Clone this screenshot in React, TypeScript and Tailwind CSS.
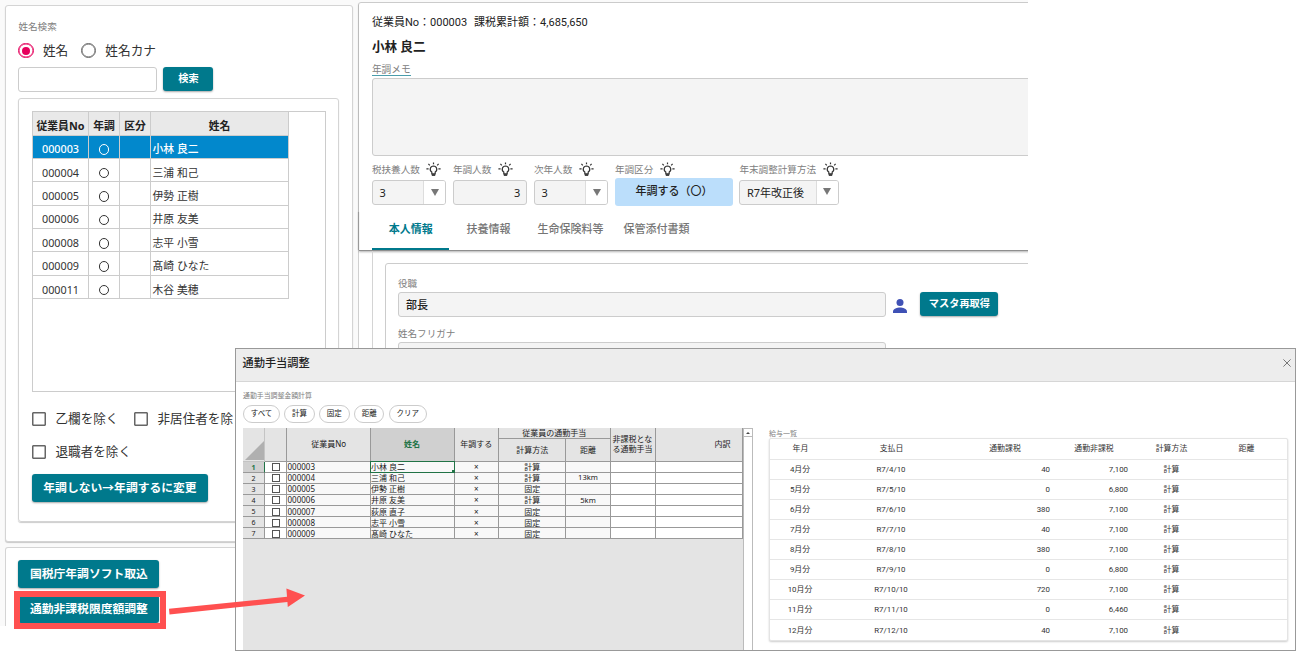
import type { ReactNode } from "react";
import clsx from "clsx";

const employees = [
  { no: "000003", name: "小林 良二" },
  { no: "000004", name: "三浦 和己" },
  { no: "000005", name: "伊勢 正樹" },
  { no: "000006", name: "井原 友美" },
  { no: "000008", name: "志平 小雪" },
  { no: "000009", name: "髙崎 ひなた" },
  { no: "000011", name: "木谷 美穂" },
];

const commuters = [
  { no: "000003", name: "小林 良二", method: "計算", distance: "" },
  { no: "000004", name: "三浦 和己", method: "計算", distance: "13km" },
  { no: "000005", name: "伊勢 正樹", method: "固定", distance: "" },
  { no: "000006", name: "井原 友美", method: "計算", distance: "5km" },
  { no: "000007", name: "荻原 直子", method: "固定", distance: "" },
  { no: "000008", name: "志平 小雪", method: "固定", distance: "" },
  { no: "000009", name: "髙崎 ひなた", method: "固定", distance: "" },
];

const payments = [
  { month: "4月分", date: "R7/4/10", taxable: "40", free: "7,100" },
  { month: "5月分", date: "R7/5/10", taxable: "0", free: "6,800" },
  { month: "6月分", date: "R7/6/10", taxable: "380", free: "7,100" },
  { month: "7月分", date: "R7/7/10", taxable: "40", free: "7,100" },
  { month: "8月分", date: "R7/8/10", taxable: "380", free: "7,100" },
  { month: "9月分", date: "R7/9/10", taxable: "0", free: "6,800" },
  { month: "10月分", date: "R7/10/10", taxable: "720", free: "7,100" },
  { month: "11月分", date: "R7/11/10", taxable: "0", free: "6,460" },
  { month: "12月分", date: "R7/12/10", taxable: "40", free: "7,100" },
];

const Button = ({
  className,
  children,
}: {
  className: string;
  children: ReactNode;
}) => (
  <button
    className={clsx(
      "flex items-center justify-center whitespace-nowrap rounded-[3px] bg-[#00798c] font-bold leading-none text-white shadow-[0_1px_2px_rgba(0,0,0,0.35)]",
      className
    )}
  >
    {children}
  </button>
);

const Radio = ({ checked, label }: { checked?: boolean; label: string }) => (
  <label className="flex items-center gap-[9px] text-[12.7px] leading-none text-[#333]">
    <span
      className={clsx(
        "flex size-[15.5px] items-center justify-center rounded-full border-[1.5px] shadow-[inset_0_0_0_0.5px_currentColor]",
        checked ? "border-[#e6005c] text-[#e6005c]" : "border-[#666] text-[#666]"
      )}
    >
      {checked && <span className="size-2 rounded-full bg-[#e6005c]" />}
    </span>
    {label}
  </label>
);

const CheckBox = ({ label }: { label: string }) => (
  <label className="flex items-center gap-[9.5px] whitespace-nowrap text-[12.6px] leading-none text-[#333]">
    <span className="size-[14px] rounded-[1px] border border-[#666] shadow-[inset_0_0_0_0.5px_#666]" />
    {label}
  </label>
);

const Bulb = () => (
  <svg
    viewBox="0 0 15 15"
    className="size-[15px] shrink-0"
    fill="none"
    stroke="#333"
    strokeWidth="1.2"
  >
    <path d="M7.5 4a3.3 3.3 0 0 0-1.7 6.1v1.7h3.4v-1.7A3.3 3.3 0 0 0 7.5 4z" />
    <path d="M5.8 13h3.4" strokeWidth="1.8" />
    <path d="M7.5.4v1.9M.4 6.9h2.2M12.4 6.9h2.2M2.4 1.9l1.4 1.4M12.6 1.9l-1.4 1.4" />
  </svg>
);

const FieldLabel = ({ children }: { children: ReactNode }) => (
  <div className="flex h-[17px] items-center gap-[6.5px] whitespace-nowrap text-[9.6px] leading-none text-[#808080]">
    {children}
    <Bulb />
  </div>
);

const Select = ({ value, className }: { value: string; className: string }) => (
  <div
    className={clsx(
      "flex h-[25px] overflow-hidden rounded-[3px] border border-[#ccc] bg-[#f4f4f4] text-[11px] leading-none text-[#222]",
      className
    )}
  >
    <span className="flex flex-1 items-center pl-[6.5px]">{value}</span>
    <span className="flex w-[22px] items-center justify-center border-l border-[#ddd] bg-white pb-px">
      <svg viewBox="0 0 8 7" className="h-[7px] w-[8px]">
        <path d="M0 0h8L4 7z" fill="#777" />
      </svg>
    </span>
  </div>
);

const EmployeeList = () => (
  <div className="h-[281px] w-[294px] border border-[#ccc] text-[10.8px] leading-none text-[#333]">
    <div className="grid h-[23.5px] w-[256px] grid-cols-[56px_31px_31px_138px] bg-[#e9e9e9] font-bold text-[#222] shadow-[inset_0_-1px_0_#ccc] *:flex *:items-center *:justify-center *:border-r *:border-[#ccc] *:pt-[6px]">
      <span>従業員No</span>
      <span>年調</span>
      <span>区分</span>
      <span>姓名</span>
    </div>
    {employees.map((e, i) => (
      <div
        key={e.no}
        className={clsx(
          "grid h-[23.4px] w-[256px] grid-cols-[56px_31px_31px_138px] *:flex *:items-center *:border-r *:border-b *:border-[#ccc] *:pt-[6px]",
          i === 0 && "bg-[#0288cc] font-medium text-white"
        )}
      >
        <span className="justify-center">{e.no}</span>
        <span className="justify-center">
          <span className="size-[10.5px] rounded-full border border-current" />
        </span>
        <span />
        <span className="pl-[1.5px]">{e.name}</span>
      </div>
    ))}
  </div>
);

const Sidebar = () => (
  <aside className="flex w-[353px] shrink-0 flex-col gap-[5px] pt-[5px] pl-[5px]">
    <section className="flex h-[537px] w-[347.5px] flex-col rounded-[3px] border border-[#d4d4d4] bg-white pl-[12.4px] shadow-[0_1px_1px_rgba(0,0,0,0.2)]">
      <div className="mt-[14.5px] text-[9.6px] leading-[12px] text-[#808080]">
        姓名検索
      </div>
      <div className="mt-[10px] flex h-4 gap-[12.5px]">
        <Radio checked label="姓名" />
        <Radio label="姓名カナ" />
      </div>
      <div className="mt-[8.5px] flex gap-[6px]">
        <div className="h-[25px] w-[139px] rounded-[3px] border border-[#ccc]" />
        <Button className="h-[24px] w-[50px] pb-px text-[10.2px]">検索</Button>
      </div>
      <div className="mt-[6px] flex h-[424px] w-[321px] flex-col rounded-[3px] border border-[#d4d4d4] pt-[12px] pl-[12.6px] shadow-[0_1px_1px_rgba(0,0,0,0.2)]">
        <EmployeeList />
        <div className="mt-[20px] flex gap-[15.5px]">
          <CheckBox label="乙欄を除く" />
          <CheckBox label="非居住者を除く" />
        </div>
        <div className="mt-[19px]">
          <CheckBox label="退職者を除く" />
        </div>
        <Button className="mt-[15px] h-[28px] w-[176px] text-[11.8px]">
          年調しない→年調するに変更
        </Button>
      </div>
    </section>
    <section className="flex w-[347.5px] flex-1 flex-col gap-[7px] rounded-t-[3px] border border-b-0 border-[#d4d4d4] bg-white pt-[12px] pl-[12.4px]">
      <Button className="h-[28px] w-[141px] text-[11.8px]">
        国税庁年調ソフト取込
      </Button>
      <Button className="h-[28px] w-[141px] pb-px text-[11.8px]">
        通勤非課税限度額調整
      </Button>
    </section>
  </aside>
);

const Main = () => (
  <main className="flex-1 overflow-hidden pt-[2px] pl-[5.4px]">
    <div className="h-[640px] w-[700px] rounded-tl-[3px] border border-[#d0d0d0] bg-white">
      <div className="flex h-[248px] flex-col border-b border-[#8f8f8f] pl-[12.5px] shadow-[0_1px_2px_rgba(0,0,0,0.3)]">
        <div className="mt-[12px] flex gap-[7px] font-[Roboto,'Noto_Sans_CJK_JP',sans-serif] text-[11px] leading-[15px] whitespace-nowrap text-[#222]">
          <span>従業員No：000003</span>
          <span>課税累計額：4,685,650</span>
        </div>
        <h1 className="mt-[7.5px] text-[12.6px] leading-[18px] font-bold text-[#222]">
          小林 良二
        </h1>
        <div className="mt-[9px] w-[39px] border-b border-[#4a9dab] text-[9.7px] leading-[10px] whitespace-nowrap text-[#808080]">
          年調メモ
        </div>
        <div className="mt-[2.5px] h-[78px] shrink-0 rounded-[3px] border border-[#ccc] bg-[#f4f4f4]" />
        <div className="mt-[5px] flex h-[45px] shrink-0 gap-[6.5px]">
          <div>
            <FieldLabel>税扶養人数</FieldLabel>
            <Select value="3" className="mt-[2px] w-[74.5px]" />
          </div>
          <div>
            <FieldLabel>年調人数</FieldLabel>
            <div className="mt-[2px] flex h-[25px] w-[74.5px] items-center justify-end rounded-[3px] border border-[#ccc] bg-[#f4f4f4] pr-[6px] text-[11px] leading-none text-[#222]">
              3
            </div>
          </div>
          <div>
            <FieldLabel>次年人数</FieldLabel>
            <Select value="3" className="mt-[2px] w-[74.5px]" />
          </div>
          <div>
            <FieldLabel>年調区分</FieldLabel>
            <div className="flex h-[28px] w-[118px] items-center justify-center rounded-[3px] bg-[#bbdefb] pb-[3px] text-[11px] leading-none font-medium whitespace-nowrap text-[#222]">
              年調する（〇）
            </div>
          </div>
          <div>
            <FieldLabel>年末調整計算方法</FieldLabel>
            <Select value="R7年改正後" className="mt-[1.5px] w-[99.5px]" />
          </div>
        </div>
        <nav className="relative mt-auto flex h-[42px] shrink-0 text-[11px] font-medium whitespace-nowrap text-[#757575] *:flex *:items-center *:justify-center">
          <i className="absolute bottom-0 -left-[13.5px] h-[38px] w-px bg-[#999] shadow-[0_0_1px_#999]" />
          <span className="w-[77.5px] border-b-2 border-[#00798c] pt-[3px] font-bold text-[#00798c]">
            本人情報
          </span>
          <span className="w-[78px] pt-px">扶養情報</span>
          <span className="w-[86px] pt-px">生命保険料等</span>
          <span className="w-[86px] pt-px">保管添付書類</span>
        </nav>
      </div>
      <div className="ml-[12.5px] h-[380px] border-l border-[#d4d4d4] pt-[12px] pl-[12px]">
        <div className="h-[360px] rounded-tl-[3px] border border-[#ccc] pt-[15px] pl-[12px]">
          <div className="text-[9.6px] leading-[10px] text-[#808080]">役職</div>
          <div className="mt-[3px] flex">
            <div className="flex h-[25px] w-[488px] items-center rounded-[3px] border border-[#ccc] bg-[#f4f4f4] pl-[7px] text-[11px] leading-none font-medium text-[#222]">
              部長
            </div>
            <svg
              viewBox="0 0 16 16"
              className="mt-[6px] ml-[6px] size-4"
              fill="#3f51b5"
            >
              <circle cx="8" cy="4.5" r="3.5" />
              <path d="M1 15v-1.6C1 11 5.3 9.6 8 9.6s7 1.4 7 3.8V15z" />
            </svg>
            <Button className="ml-[12.5px] h-[23.5px] w-[78px] pb-px text-[10.2px]">
              マスタ再取得
            </Button>
          </div>
          <div className="mt-[12px] text-[9.6px] leading-[10px] text-[#808080]">
            姓名フリガナ
          </div>
          <div className="mt-[3px] h-[25px] w-[488px] rounded-[3px] border border-[#ccc] bg-[#f4f4f4]" />
        </div>
      </div>
    </div>
  </main>
);

const Sheet = () => (
  <div className="flex h-[222px] w-[509.5px] bg-[#e4e4e4] text-[8px] leading-none text-[#222]">
    <div className="w-[499.5px]">
      <div className="grid h-[33.5px] grid-cols-[22px_22px_83.5px_84px_44.5px_66.5px_45px_45px_87px] grid-rows-[10.5px_23px] *:flex *:items-center *:justify-center *:border-r *:border-b *:border-[#999]">
        <span className="row-span-2 !items-end !justify-end !border-[#c4c4c4]">
          <svg viewBox="0 0 19 19" className="mb-px h-[19px] w-[19px]">
            <path d="M19 0v19H0z" fill="#b0b0b0" />
          </svg>
        </span>
        <span className="row-span-2" />
        <span className="row-span-2 pl-px">従業員No</span>
        <span className="row-span-2 bg-[#d0d0d0] font-bold text-[#217346]">
          姓名
        </span>
        <span className="row-span-2">年調する</span>
        <span className="col-span-2">従業員の通勤手当</span>
        <span className="row-span-2 text-center leading-[10px]">
          非課税とな
          <br />
          る通勤手当
        </span>
        <span className="row-span-2 !justify-end pr-[11px]">内訳</span>
        <span className="col-start-6 row-start-2 pl-px">計算方法</span>
        <span className="col-start-7 row-start-2 pl-px">距離</span>
      </div>
      {commuters.map((c, i) => (
        <div
          key={c.no}
          className="grid h-[11.15px] grid-cols-[22px_22px_83.5px_84px_44.5px_66.5px_45px_45px_87px] bg-[#f8f8f8] whitespace-nowrap *:flex *:items-center *:justify-center *:border-r *:border-b *:border-[#999] *:pt-px"
        >
          <span
            className={clsx(
              "text-[7px]",
              i === 0
                ? "!border-r-[#217346] bg-[#d0d0d0] font-bold text-[#217346]"
                : "bg-[#e4e4e4]"
            )}
          >
            {i + 1}
          </span>
          <span className="bg-white">
            <span className="size-[8px] border border-[#555] bg-white" />
          </span>
          <span className="!justify-start pl-[0.5px]">{c.no}</span>
          <span
            className={clsx(
              "!justify-start pl-[0.5px]",
              i === 0 && "relative z-10"
            )}
          >
            {c.name}
            {i === 0 && (
              <span className="absolute -top-px -right-px -bottom-px -left-px border border-[#217346]">
                <span className="absolute -right-px -bottom-px size-[3px] bg-[#217346]" />
              </span>
            )}
          </span>
          <span>×</span>
          <span className="pl-px">{c.method}</span>
          <span className="pl-px text-[7.6px]">{c.distance}</span>
          <span className="bg-white" />
          <span className="bg-white" />
        </div>
      ))}
    </div>
    <div className="w-[10px] border-x border-[#bbb] bg-white">
      <div className="flex h-[9px] items-center justify-center border-y border-[#bbb]">
        <svg viewBox="0 0 4 2" className="h-[2px] w-[4px]">
          <path d="M0 2h4L2 0z" fill="#444" />
        </svg>
      </div>
    </div>
  </div>
);

const PaymentTable = () => (
  <div className="-ml-px h-[203px] w-[518.5px] rounded-[2px] border border-[#e4e4e4] bg-white font-[Roboto,'Noto_Sans_CJK_JP',sans-serif] text-[7.9px] leading-none text-[#333] shadow-[0_1px_2px_rgba(0,0,0,0.2)]">
    <div className="grid h-[20.5px] grid-cols-[61px_121px_106px_72px_83px_67px] border-b border-[#e6e6e6] text-center *:flex *:items-center *:justify-center *:pt-px">
      <span>年月</span>
      <span>支払日</span>
      <span>通勤課税</span>
      <span>通勤非課税</span>
      <span>計算方法</span>
      <span>距離</span>
    </div>
    {payments.map((p) => (
      <div
        key={p.month}
        className="grid h-[20.1px] grid-cols-[60px_122px_98px_78px_87px_71px] border-b border-[#e6e6e6] *:flex *:items-center *:pt-px last:border-b-0"
      >
        <span className="justify-center">{p.month}</span>
        <span className="justify-center">{p.date}</span>
        <span className="justify-end">{p.taxable}</span>
        <span className="justify-end">{p.free}</span>
        <span className="justify-center">計算</span>
        <span />
      </div>
    ))}
  </div>
);

const CommuteDialog = () => (
  <div className="absolute top-[348px] left-[235px] h-[303px] w-[1061px] border border-[#999] bg-white">
    <header className="flex h-[33px] items-center justify-between border-b border-[#d6d6d6] bg-[#ededed] pr-[4.5px] pb-[4px] pl-[6.5px]">
      <h2 className="text-[11.2px] leading-none font-medium text-[#222]">
        通勤手当調整
      </h2>
      <svg
        viewBox="0 0 8 8"
        className="-mt-px size-[8px]"
        stroke="#777"
        fill="none"
      >
        <path d="M.4.4l7.2 7.2M7.6.4L.4 7.6" />
      </svg>
    </header>
    <div className="flex gap-[17.5px] pl-[7px]">
      <div>
        <div className="mt-[9px] text-[6.9px] leading-[9px] text-[#808080]">
          通勤手当調整金額計算
        </div>
        <div className="mt-[5px] flex h-[18px] gap-[4.3px] text-[7.5px] leading-none text-[#222] *:flex *:items-center *:justify-center *:rounded-full *:border *:border-[#ccc]">
          <span className="w-[37px]">すべて</span>
          <span className="w-[30.5px]">計算</span>
          <span className="w-[30.5px]">固定</span>
          <span className="w-[30.5px]">距離</span>
          <span className="w-[38px]">クリア</span>
        </div>
        <div className="mt-[5px]">
          <Sheet />
        </div>
      </div>
      <div className="pt-[47px]">
        <div className="-ml-px h-[9px] text-[7px] leading-[9px] text-[#808080]">
          給与一覧
        </div>
        <PaymentTable />
      </div>
    </div>
  </div>
);

const App = () => {
  return (
    <div className="relative h-[658px] w-[1301px] overflow-hidden bg-white font-['Noto_Sans','Noto_Sans_CJK_JP',sans-serif]">
      <div className="flex h-[626px] w-[1028px] overflow-hidden bg-[#fafafa]">
        <Sidebar />
        <Main />
      </div>
      <CommuteDialog />
      <div className="absolute top-[591px] left-[14px] h-[38px] w-[152px] border-[6px] border-[#ff5050]" />
      <svg
        viewBox="0 0 140 24"
        className="absolute top-[586px] left-[168px] h-[24px] w-[140px] overflow-visible"
        fill="#ff5050"
      >
        <path d="M1 22.8l118-12-.6-8.2L137 9.4 119.8 21l-.4-5L1.5 28.6z" />
      </svg>
    </div>
  );
};

export default App;
